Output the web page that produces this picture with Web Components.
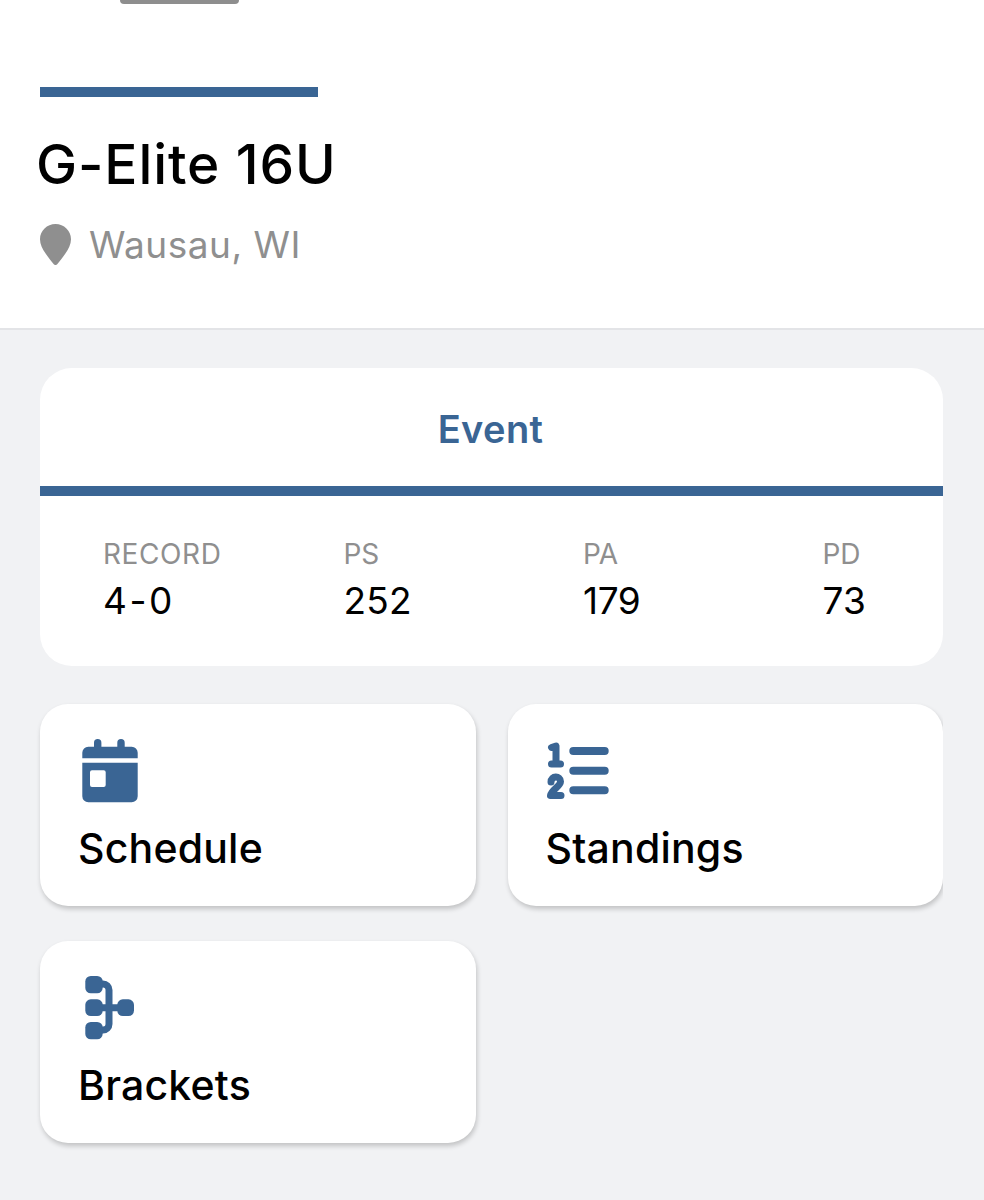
<!DOCTYPE html>
<html>
<head>
<meta charset="utf-8">
<style>
    html, body { margin: 0; height: 1200px; overflow: hidden; background: #f1f2f4; }
    body { font-family: Inter, "Noto Sans", "Liberation Sans", sans-serif; }
</style>
</head>
<body>
<team-header name="G-Elite 16U" place="Wausau, WI"></team-header>
<page-body>
    <event-card title="Event">
        <event-stat label="RECORD" value="4-0" style="--value-spacing: 2.5px; --label-spacing: .6px; --nudge: -1px"></event-stat>
        <event-stat label="PS" value="252"></event-stat>
        <event-stat label="PA" value="179" style="--value-spacing: -.4px"></event-stat>
        <event-stat label="PD" value="73"></event-stat>
    </event-card>
    <tile-grid>
        <nav-tile label="Schedule">
            <svg slot="icon" width="56" height="64" viewBox="0 0 56 64" fill="#3a6594">
                <path d="M6.300 7.700H12V3.700a3.700 3.700 0 0 1 7.400 0v4h15.900v-4a3.700 3.700 0 0 1 7.400 0v4h7a6 6 0 0 1 6 6v5.600H.3v-5.600a6 6 0 0 1 6-6z"/>
                <path fill-rule="evenodd" d="M.3 23.700h55.400v33.600a6 6 0 0 1-6 6H6.300a6 6 0 0 1-6-6zM10 31.300a2 2 0 0 0-2 2V46a2 2 0 0 0 2 2h11.700a2 2 0 0 0 2-2V33.300a2 2 0 0 0-2-2z"/>
            </svg>
        </nav-tile>
        <nav-tile label="Standings">
            <svg slot="icon" style="margin: 3px 0 0 -4px" width="64" height="58" viewBox="0 0 64 58" fill="none" stroke="#3a6594" stroke-linecap="round" stroke-linejoin="round">
                <path stroke-width="8" d="M27.300 9h31.400M27.300 28.700h31.400M27.300 48.300h31.400"/>
                <path stroke-width="7" d="M5.500 5.500L10 4v18M5.500 22h9"/>
                <path stroke-width="7" d="M5 40c0-6.500 9.500-6.500 9.500-.5 0 5-9 8-10 14h10.500"/>
            </svg>
        </nav-tile>
        <nav-tile label="Brackets">
            <svg slot="icon" width="56" height="64" viewBox="0 0 56 64" fill="#3a6594">
                <path d="M16 8h5a6 6 0 0 1 6 6v34a6 6 0 0 1-6 6h-5M16 31.700h30" fill="none" stroke="#3a6594" stroke-width="7"/>
                <rect x="3.300" y="0" width="17.400" height="17.300" rx="5.500"/>
                <rect x="3.300" y="23.300" width="17.400" height="16.700" rx="5.500"/>
                <rect x="3.300" y="46" width="17.400" height="17.300" rx="5.500"/>
                <rect x="35.300" y="23.300" width="16.700" height="16.700" rx="5.500"/>
            </svg>
        </nav-tile>
    </tile-grid>
</page-body>

<script>
const BLUE = '#3a6594';

class TeamHeader extends HTMLElement {
    connectedCallback() {
        this.attachShadow({ mode: 'open' });
        this.shadowRoot.innerHTML = `
            <style>
                :host { display: block; box-sizing: border-box; height: 330px; background: #fff; border-bottom: 2px solid #e3e4e7; }
                .grip { width: 119px; height: 4px; margin-left: 120px; background: #8e8e8e; border-radius: 0 0 8px 8px; }
                .rule { width: 278px; height: 10px; margin: 83px 0 0 40px; background: ${BLUE}; }
                h1 { margin: 32px 0 0 36px; font-size: 55px; line-height: 70px; font-weight: 500; color: #000; letter-spacing: .9px; }
                .place { display: flex; align-items: center; gap: 18px; margin: 24px 0 0 40px; color: #8f8f8f; font-size: 37px; line-height: 44px; letter-spacing: .5px; }
                svg { display: block; margin-top: -2px; }
            </style>
            <div class="grip"></div>
            <div class="rule"></div>
            <h1>${this.getAttribute('name')}</h1>
            <div class="place">
                <svg width="31" height="41" viewBox="0 0 31 41"><path fill="#8f8f8f" d="M15.500 0C7 0 0 6.700 0 15.200c0 5.300 2.600 9.800 5.600 14.300 2.600 3.800 5.800 7.700 8.200 10.700.9 1.100 2.500 1.100 3.400 0 2.400-3 5.600-6.900 8.200-10.700 3-4.500 5.600-9 5.600-14.300C31 6.700 24 0 15.500 0z"/></svg>
                <span>${this.getAttribute('place')}</span>
            </div>
        `;
    }
}

class PageBody extends HTMLElement {
    connectedCallback() {
        this.attachShadow({ mode: 'open' });
        this.shadowRoot.innerHTML = `
            <style>
                :host { display: flex; flex-direction: column; gap: 38px; padding: 38px 41px 0 40px; }
            </style>
            <slot></slot>
        `;
    }
}

class EventCard extends HTMLElement {
    connectedCallback() {
        this.attachShadow({ mode: 'open' });
        this.shadowRoot.innerHTML = `
            <style>
                :host { display: block; height: 298px; background: #fff; border-radius: 32px; overflow: hidden; }
                .title { height: 118px; padding: 3px 2px 0 0; box-sizing: border-box; display: flex; align-items: center; justify-content: center; color: ${BLUE}; font-size: 38px; font-weight: 600; letter-spacing: .4px; }
                .rule { height: 10px; background: ${BLUE}; }
                .stats { display: grid; grid-template-columns: repeat(4, 239.5px); padding: 40px 0 0 64px; }
            </style>
            <div class="title">${this.getAttribute('title')}</div>
            <div class="rule"></div>
            <div class="stats"><slot></slot></div>
        `;
    }
}

class EventStat extends HTMLElement {
    connectedCallback() {
        this.attachShadow({ mode: 'open' });
        this.shadowRoot.innerHTML = `
            <style>
                :host { display: block; margin-left: var(--nudge, 0); }
                .label { font-size: 28px; line-height: 36px; color: #8f8f8f; letter-spacing: var(--label-spacing, -.1px); }
                .value { font-size: 37px; line-height: 46px; margin-top: 6px; color: #000; letter-spacing: var(--value-spacing, .2px); }
            </style>
            <div class="label">${this.getAttribute('label')}</div>
            <div class="value">${this.getAttribute('value')}</div>
        `;
    }
}

class TileGrid extends HTMLElement {
    connectedCallback() {
        this.attachShadow({ mode: 'open' });
        this.shadowRoot.innerHTML = `
            <style>
                :host { display: grid; grid-template-columns: 1fr 1fr; column-gap: 32px; row-gap: 35px; clip-path: inset(-20px 0 -20px -20px); }
            </style>
            <slot></slot>
        `;
    }
}

class NavTile extends HTMLElement {
    connectedCallback() {
        this.attachShadow({ mode: 'open' });
        this.shadowRoot.innerHTML = `
            <style>
                :host { display: block; box-sizing: border-box; height: 202px; padding: 35px 0 0 38px; background: #fff; border-radius: 28px; box-shadow: 1px 3px 5px rgba(0,0,0,.2); }
                .icon { display: flow-root; height: 64px; margin-left: 4px; }
                ::slotted(svg) { display: block; }
                .label { margin-top: 17px; font-size: 41px; line-height: 56px; font-weight: 500; color: #000; letter-spacing: .2px; }
            </style>
            <div class="icon"><slot name="icon"></slot></div>
            <div class="label">${this.getAttribute('label')}</div>
        `;
    }
}

customElements.define('team-header', TeamHeader);
customElements.define('page-body', PageBody);
customElements.define('event-card', EventCard);
customElements.define('event-stat', EventStat);
customElements.define('tile-grid', TileGrid);
customElements.define('nav-tile', NavTile);
</script>
</body>
</html>
